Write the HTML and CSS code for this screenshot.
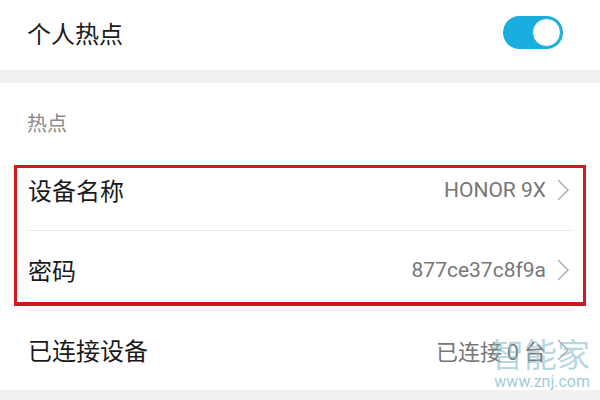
FILE: index.html
```html
<!DOCTYPE html>
<html lang="zh-CN">
<head>
    <meta charset="UTF-8">
    <meta name="viewport" content="width=device-width, initial-scale=1.0">
    <title>个人热点</title>
    <link rel="stylesheet" href="styles.css">
</head>
<body>
    <div class="page">
        <section class="top-row">
            <span class="label">个人热点</span>
            <span class="switch on"><span class="knob"></span></span>
        </section>

        <div class="band"></div>

        <section class="group">
            <div class="group-title">热点</div>

            <div class="highlight">
                <div class="row">
                    <span class="label">设备名称</span>
                    <span class="value">HONOR 9X
                        <svg class="chevron" viewBox="0 0 12 22"><path d="M1 1 L11 11 L1 21"/></svg>
                    </span>
                </div>
                <div class="row">
                    <span class="label">密码</span>
                    <span class="value">877ce37c8f9a
                        <svg class="chevron" viewBox="0 0 12 22"><path d="M1 1 L11 11 L1 21"/></svg>
                    </span>
                </div>
            </div>

            <div class="row last">
                <span class="label">已连接设备</span>
                <span class="value">已连接 0 台
                    <svg class="chevron" viewBox="0 0 12 22"><path d="M1 1 L11 11 L1 21"/></svg>
                </span>
            </div>
        </section>

        <div class="band"></div>

        <div class="watermark">
            <span class="wm-name">智能家</span>
            <span class="wm-url">www.znj.com</span>
        </div>
    </div>
</body>
</html>
```

FILE: styles.css
```css
* {
    margin: 0;
    padding: 0;
    box-sizing: border-box;
}

body {
    background: #ffffff;
    font-family: 'Noto Sans CJK SC', sans-serif;
    color: #1c1c1c;
    width: 600px;
    height: 400px;
    overflow: hidden;
}

.page {
    position: relative;
    width: 600px;
}

.label {
    font-size: 24px;
    line-height: 30px;
    color: #1a1a1a;
}

.top-row {
    height: 70px;
    padding: 0 37px 5px 27px;
    display: flex;
    align-items: center;
    justify-content: space-between;
}

.switch {
    width: 60px;
    height: 33px;
    border-radius: 17px;
    background: #1aaedf;
    display: flex;
    align-items: center;
    justify-content: flex-end;
    padding: 2px;
}

.knob {
    width: 29px;
    height: 29px;
    border-radius: 50%;
    background: #ffffff;
    border: 1px solid #1aaedf;
}

.band {
    height: 13px;
    background: #f1f1f1;
}

.group-title {
    height: 68px;
    padding: 27px 0 15px 27px;
    font-size: 20px;
    line-height: 26px;
    color: #8a8a8a;
}

.highlight {
    position: relative;
}

/* red annotation frame drawn over the two rows */
.highlight::after {
    content: '';
    position: absolute;
    left: 14px;
    right: 14px;
    top: 14px;
    bottom: 5px;
    border: 3px solid #cc1a20;
    border-bottom-width: 4px;
    pointer-events: none;
}

.row {
    height: 80px;
    margin: 0 27px;
    padding: 0 4px 1px 1px;
    border-bottom: 1px solid #ebebeb;
    display: flex;
    align-items: center;
    justify-content: space-between;
}

.row.last {
    border-bottom: none;
    height: 79px;
}

.value {
    display: flex;
    align-items: center;
    gap: 11px;
    font-family: 'Roboto', 'Noto Sans CJK SC', sans-serif;
    font-size: 21px;
    color: #777777;
}

.row.last .value {
    font-family: 'Noto Sans CJK SC', sans-serif;
    font-size: 22px;
}

.chevron {
    width: 12px;
    height: 22px;
    fill: none;
    stroke: #b0b0b0;
    stroke-width: 1.5;
}

.band:last-child {
    height: 10px;
}

.watermark {
    position: absolute;
    left: 486px;
    top: 333px;
    width: 104px;
    display: flex;
    flex-direction: column;
    align-items: flex-end;
    color: rgba(135, 188, 205, 0.6);
    pointer-events: none;
}

.wm-name {
    font-size: 33px;
    line-height: 40px;
}

.wm-url {
    font-family: 'Roboto', sans-serif;
    font-size: 16px;
    line-height: 18px;
    color: rgba(135, 188, 205, 0.8);
}
```
